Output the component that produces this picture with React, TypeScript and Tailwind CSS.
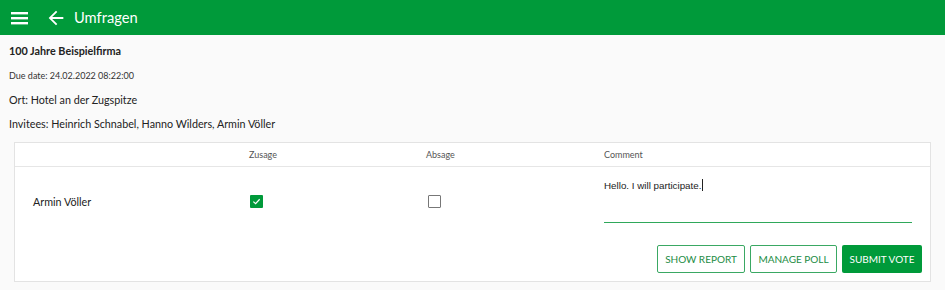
import React from "react";

export default function App() {
  return (
    <div className="w-[945px] h-[290px] bg-[#fafafa] overflow-hidden" style={{ fontFamily: "Lato, 'Noto Sans', sans-serif" }}>
      <header className="h-[35px] bg-[#009a3a] flex items-center text-white">
        <svg width="17" height="14" viewBox="0 0 17 14" className="ml-[11px]">
          <rect x="0" y="1" width="17" height="2.4" fill="white" />
          <rect x="0" y="6" width="17" height="2.4" fill="white" />
          <rect x="0" y="11" width="17" height="2.4" fill="white" />
        </svg>
        <svg width="22" height="22" viewBox="0 0 24 24" className="ml-[17px]">
          <path d="M20 11H7.83l5.59-5.59L12 4l-8 8 8 8 1.41-1.41L7.83 13H20v-2z" fill="white" />
        </svg>
        <span className="ml-[7px] text-[14.7px] leading-none">Umfragen</span>
      </header>
      <div className="pl-[9px] text-[#222]">
        <div className="pt-[9px] text-[10.8px] font-bold leading-[14px]">100 Jahre Beispielfirma</div>
        <div className="mt-[12px] text-[9px] leading-[12px] text-[#333]">Due date: 24.02.2022 08:22:00</div>
        <div className="mt-[11px] text-[10.75px] leading-[14px]">Ort: Hotel an der Zugspitze</div>
        <div className="mt-[10px] text-[10.75px] leading-[14px]">Invitees: Heinrich Schnabel, Hanno Wilders, Armin Völler</div>
      </div>
      <div className="ml-[14px] mt-[11px] w-[917px] h-[140px] bg-white border border-[#e3e3e3]">
        <div className="h-[24px] border-b border-[#e6e6e6] grid grid-cols-[234px_177px_178px_1fr] items-center text-[9px] text-[#555]">
          <div />
          <div>Zusage</div>
          <div>Absage</div>
          <div>Comment</div>
        </div>
        <div className="grid grid-cols-[234px_177px_178px_1fr]">
          <div className="pl-[18px] pt-[27px] text-[10.75px] text-[#222]">Armin Völler</div>
          <div className="pt-[28px] pl-[1px]">
            <div className="w-[13px] h-[13px] bg-[#009a3a] rounded-[1px] flex items-center justify-center">
              <svg width="9" height="9" viewBox="0 0 10 10">
                <path d="M1.5 5.2 L4 7.5 L8.5 2.5" stroke="white" strokeWidth="1.3" fill="none" />
              </svg>
            </div>
          </div>
          <div className="pt-[28px] pl-[2px]">
            <div className="w-[13px] h-[13px] border border-[#777] rounded-[1px] bg-white" />
          </div>
          <div className="pr-[18px] pt-[12px]">
            <div className="h-[44px] border-b border-[#2fa85a] text-[9.8px] text-[#222] flex items-start" style={{ fontFamily: "'Liberation Sans', Arial, sans-serif" }}>
              <span>Hello. I will participate.</span>
              <span className="inline-block w-px h-[12px] bg-[#222] ml-[1px]" />
            </div>
          </div>
        </div>
        <div className="flex justify-end gap-[5px] pr-[8px] mt-[22px]">
          <button className="h-[28px] w-[88px] border border-[#3aa863] text-[#1c8c44] text-[10px] bg-white rounded-[2px]">SHOW REPORT</button>
          <button className="h-[28px] w-[87px] border border-[#3aa863] text-[#1c8c44] text-[10px] bg-white rounded-[2px]">MANAGE POLL</button>
          <button className="h-[28px] w-[80px] bg-[#009a3a] text-white text-[10px] rounded-[2px]">SUBMIT VOTE</button>
        </div>
      </div>
    </div>
  );
}
